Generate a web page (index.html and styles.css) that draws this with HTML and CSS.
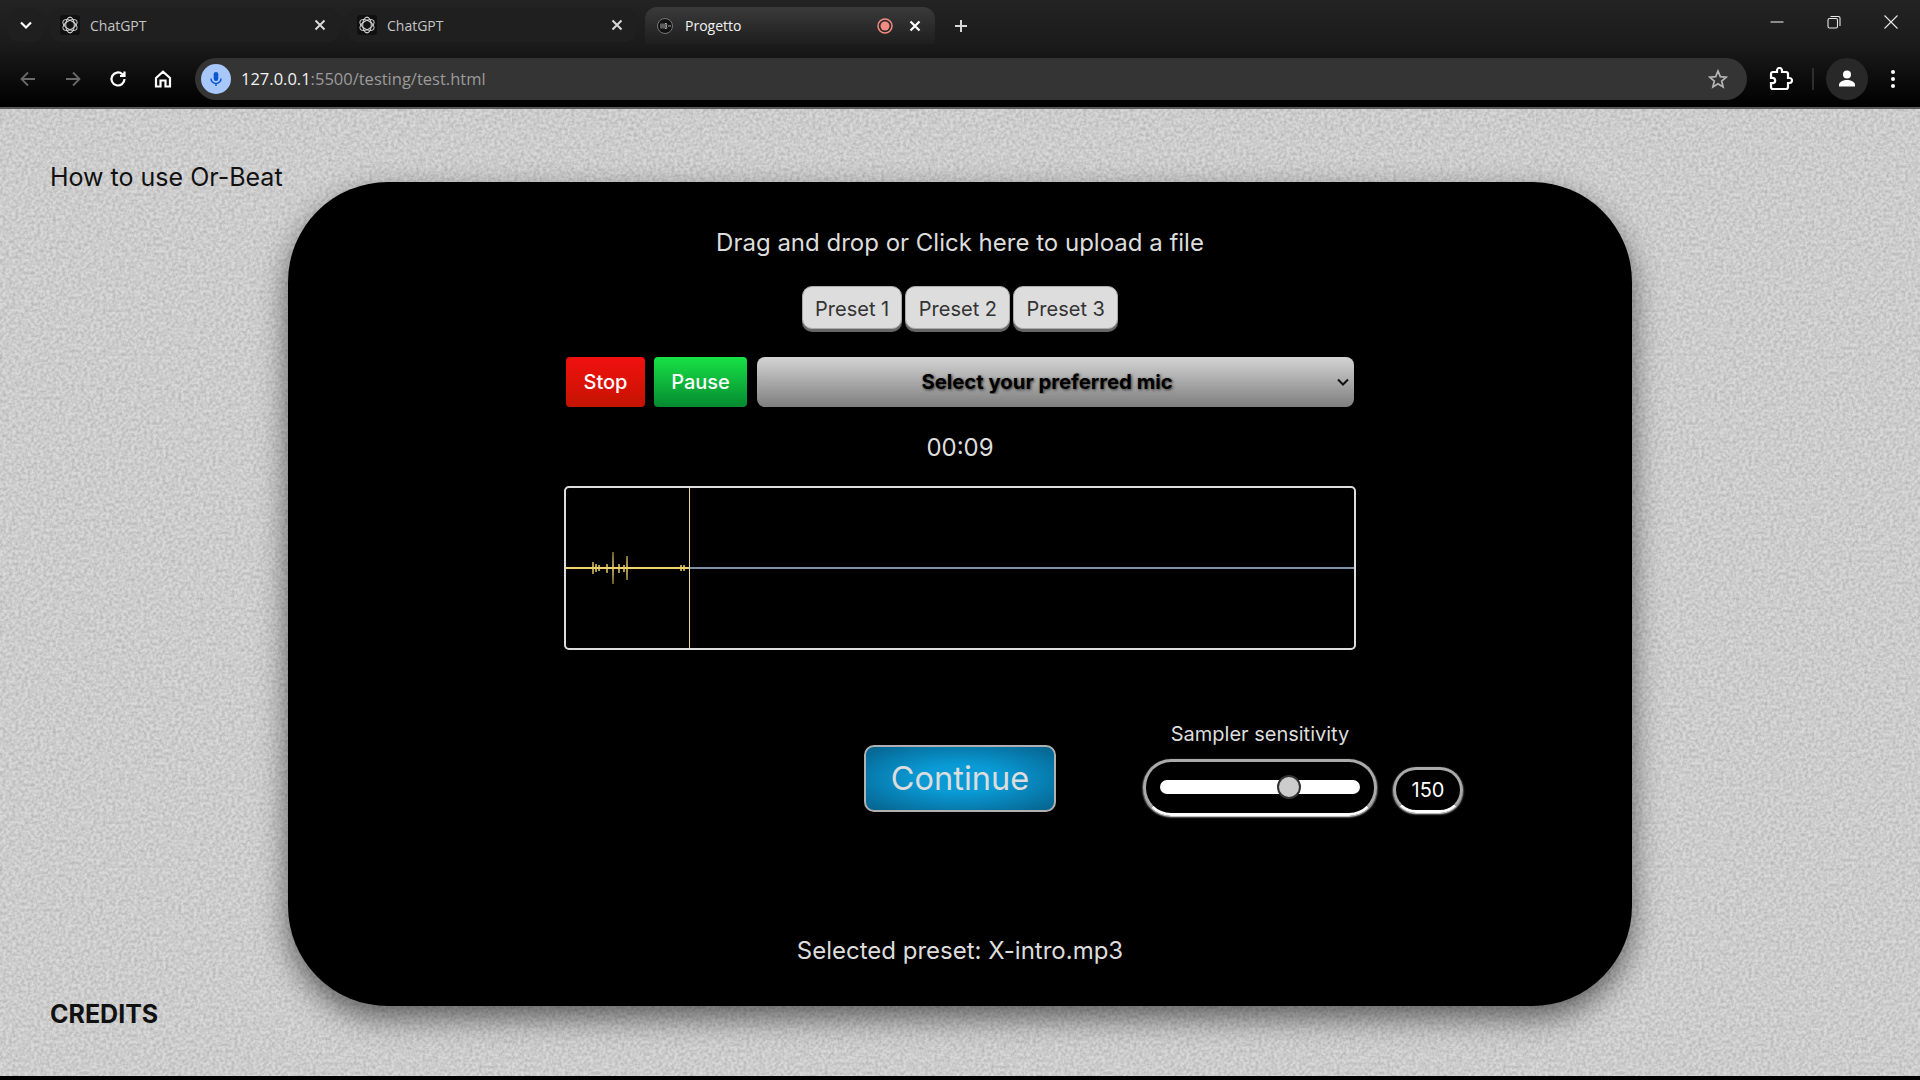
FILE: index.html
```html
<!DOCTYPE html>
<html lang="en">
<head>
    <meta charset="UTF-8">
    <meta name="viewport" content="width=device-width, initial-scale=1.0">
    <title>Progetto</title>
    <link rel="stylesheet" href="styles.css">
</head>
<body>

<header class="browser">
    <div class="tabstrip">
        <div class="tab-search">
            <svg width="16" height="16" viewBox="0 0 16 16"><path d="M3 5.500 8 10.500 13 5.500" class="line-white thick"/></svg>
        </div>
        <div class="tab">
            <span class="favicon">
                <svg width="18" height="18" viewBox="0 0 16 16"><g class="knot"><ellipse cx="8" cy="8" rx="3.800" ry="7"/><ellipse cx="8" cy="8" rx="3.800" ry="7" transform="rotate(60 8 8)"/><ellipse cx="8" cy="8" rx="3.800" ry="7" transform="rotate(120 8 8)"/></g></svg>
            </span>
            <span class="tab-title">ChatGPT</span>
            <svg class="tab-close" width="12" height="12" viewBox="0 0 12 12"><path d="M1.500 1.500 10.500 10.500M10.500 1.500 1.500 10.500" class="line-soft"/></svg>
        </div>
        <div class="tab">
            <span class="favicon">
                <svg width="18" height="18" viewBox="0 0 16 16"><g class="knot"><ellipse cx="8" cy="8" rx="3.800" ry="7"/><ellipse cx="8" cy="8" rx="3.800" ry="7" transform="rotate(60 8 8)"/><ellipse cx="8" cy="8" rx="3.800" ry="7" transform="rotate(120 8 8)"/></g></svg>
            </span>
            <span class="tab-title">ChatGPT</span>
            <svg class="tab-close" width="12" height="12" viewBox="0 0 12 12"><path d="M1.500 1.500 10.500 10.500M10.500 1.500 1.500 10.500" class="line-soft"/></svg>
        </div>
        <div class="tab tab-active">
            <span class="favicon favicon-round">
                <svg width="16" height="16" viewBox="0 0 16 16"><circle cx="8" cy="8" r="7.500" fill="#111" stroke="#777"/><path d="M4 5.500V10.500M6 5.500V10.500M8 5.500H9.500Q10.500 7 9 8Q10.500 9 9.500 10.500H8ZM11 8H14" fill="none" stroke="#aaa" stroke-width="1"/></svg>
            </span>
            <span class="tab-title">Progetto</span>
            <svg class="tab-record" width="16" height="16" viewBox="0 0 16 16"><circle cx="8" cy="8" r="7" fill="none" stroke="#f28b82" stroke-width="1.500"/><circle cx="8" cy="8" r="4.500" fill="#f28b82"/></svg>
            <svg class="tab-close" width="12" height="12" viewBox="0 0 12 12"><path d="M1.500 1.500 10.500 10.500M10.500 1.500 1.500 10.500" class="line-white thick"/></svg>
        </div>
        <div class="new-tab">
            <svg width="14" height="14" viewBox="0 0 14 14"><path d="M7 1V13M1 7H13" class="line-soft"/></svg>
        </div>
        <div class="window-controls">
            <svg width="14" height="14" viewBox="0 0 14 14"><path d="M0.500 7H13.500" class="line-thin"/></svg>
            <svg width="14" height="14" viewBox="0 0 14 14"><path d="M3.500 1.500H11.500Q13 1.500 13 3V11" class="line-thin"/><rect x="1" y="3.500" width="9.500" height="9.500" rx="1.500" class="line-thin"/></svg>
            <svg width="14" height="14" viewBox="0 0 14 14"><path d="M0.500 0.500 13.500 13.500M13.500 0.500 0.500 13.500" class="line-thin"/></svg>
        </div>
    </div>

    <div class="toolbar">
        <svg class="nav-icon" width="18" height="18" viewBox="0 0 18 18"><path d="M16 9H2.500M9 2.500 2.500 9 9 15.500" class="line-dim"/></svg>
        <svg class="nav-icon" width="18" height="18" viewBox="0 0 18 18"><path d="M2 9H15.500M9 2.500 15.500 9 9 15.500" class="line-dim"/></svg>
        <svg class="nav-icon" width="18" height="18" viewBox="0 0 18 18"><path d="M15.500 9A6.500 6.500 0 1 1 13.400 4.200L15.500 6M15.500 1.500V6H11" class="line-white thick"/></svg>
        <svg class="nav-icon" width="18" height="18" viewBox="0 0 18 18"><path d="M2 8 9 1.800 16 8V16.500H11.500V10.500H6.500V16.500H2Z" class="line-white thick"/></svg>

        <div class="address-bar">
            <span class="mic-badge">
                <svg width="18" height="18" viewBox="0 0 18 18"><rect x="6.700" y="2" width="4.600" height="9" rx="2.300" fill="#0b57d0"/><path d="M4 8.500A5 5 0 0 0 14 8.500M9 13.500V16" fill="none" stroke="#0b57d0" stroke-width="1.500"/></svg>
            </span>
            <span class="url"><span class="url-host">127.0.0.1</span>:5500/testing/test.html</span>
            <svg class="star" width="20" height="20" viewBox="0 0 20 20"><path d="M10 2 12.300 7.600 18.300 8.100 13.700 12 15.100 17.900 10 14.700 4.900 17.900 6.300 12 1.700 8.100 7.700 7.600Z" fill="none" stroke="#b5b5b5" stroke-width="1.700"/></svg>
        </div>

        <svg class="extension" width="24" height="24" viewBox="0 0 24 24"><path d="M20.500 11H19V7c0-1.100-.9-2-2-2h-4V3.500C13 2.120 11.880 1 10.500 1S8 2.120 8 3.500V5H4c-1.100 0-1.990.9-1.990 2v3.800H3.500c1.490 0 2.700 1.210 2.700 2.700s-1.210 2.700-2.700 2.700H2V20c0 1.100.9 2 2 2h13c1.100 0 2-.9 2-2v-4h1.500c1.380 0 2.500-1.120 2.500-2.500S21.880 11 20.500 11z" class="line-white thick"/></svg>
        <span class="toolbar-sep"></span>
        <span class="avatar">
            <svg width="20" height="20" viewBox="0 0 20 20"><circle cx="10" cy="5.500" r="4" fill="#fff"/><path d="M2 17.500V16C2 12.500 6.500 11 10 11S18 12.500 18 16V17.500Z" fill="#fff"/></svg>
        </span>
        <svg class="menu-dots" width="6" height="20" viewBox="0 0 6 20"><circle cx="3" cy="3" r="2" fill="#fff"/><circle cx="3" cy="10" r="2" fill="#fff"/><circle cx="3" cy="17" r="2" fill="#fff"/></svg>
    </div>
</header>

<div class="page">
    <aside class="side-links">
        <a class="how-to">How to use Or-Beat</a>
        <a class="credits">CREDITS</a>
    </aside>

    <main class="card">
        <p class="upload-text">Drag and drop or Click here to upload a file</p>

        <div class="presets">
            <button class="preset">Preset 1</button>
            <button class="preset">Preset 2</button>
            <button class="preset">Preset 3</button>
        </div>

        <div class="controls">
            <button class="btn-stop">Stop</button>
            <button class="btn-pause">Pause</button>
            <select class="mic-select">
                <option>Select your preferred mic</option>
            </select>
        </div>

        <p class="timer">00:09</p>

        <div class="waveform">
            <svg width="788" height="160" viewBox="0 0 788 160">
                <defs>
                    <linearGradient id="spike-fade" gradientUnits="userSpaceOnUse" x1="0" y1="48" x2="0" y2="112">
                        <stop offset="0" stop-color="#ecd06a" stop-opacity="0.1"/>
                        <stop offset="0.5" stop-color="#ecd06a"/>
                        <stop offset="1" stop-color="#ecd06a" stop-opacity="0.1"/>
                    </linearGradient>
                </defs>
                <path d="M123 80H788" stroke="#7992ac" stroke-width="2"/>
                <path d="M0 80H123" stroke="#f0d46e" stroke-width="2"/>
                <g class="spikes">
                    <path d="M27 74V86M30 76V84M33 77V83"/>
                    <path d="M41 76V85"/>
                    <path d="M47 64V96"/>
                    <path d="M53 76V85M58 77V84"/>
                    <path d="M61 68V92"/>
                    <path d="M115 77V83M118 77V83"/>
                </g>
                <path d="M123.500 0V160" stroke="#e8d690" stroke-width="1"/>
            </svg>
        </div>

        <div class="bottom-row">
            <div class="continue-cell">
                <button class="btn-continue">Continue</button>
            </div>
            <div class="sampler">
                <div class="sampler-main">
                    <label class="sampler-label" for="sensitivity">Sampler sensitivity</label>
                    <div class="slider-pill">
                        <input type="range" id="sensitivity" min="50" max="200" value="150">
                    </div>
                </div>
                <output class="sampler-value">150</output>
            </div>
        </div>

        <p class="selected">Selected preset: X-intro.mp3</p>
    </main>
</div>

</body>
</html>
```
FILE: styles.css
```css
* {
    box-sizing: border-box;
}
html, body {
    margin: 0;
    height: 1080px;
    overflow: hidden;
}
body {
    font-family: Inter, "Noto Sans", sans-serif;
    background: #000;
    display: flex;
    flex-direction: column;
}
p {
    margin: 0;
}

/* svg line helpers */
.line-white, .line-soft, .line-dim, .line-thin {
    fill: none;
    stroke-width: 1.6;
}
.line-white { stroke: #fff; }
.line-soft { stroke: #d8d8d8; stroke-width: 2; }
.line-dim { stroke: #6a6a6a; stroke-width: 1.8; }
.line-thin { stroke: #e6e6e6; stroke-width: 1.1; }
.thick { stroke-width: 2.2; }
.knot ellipse {
    fill: none;
    stroke: #d0d0d0;
    stroke-width: 0.9;
}

/* browser chrome */
.browser {
    font-family: "Open Sans", "Noto Sans", sans-serif;
    flex: none;
}
.tabstrip {
    height: 44px;
    background: linear-gradient(#232323, #1b1b1b);
    display: flex;
    align-items: flex-end;
    padding-left: 8px;
}
.tab-search {
    width: 36px;
    height: 34px;
    margin-bottom: 2px;
    border-radius: 12px;
    background: #1f1f1f;
    display: flex;
    align-items: center;
    justify-content: center;
}
.tab {
    width: 290px;
    height: 34px;
    margin: 0 0 2px 6px;
    padding: 0 14px 0 10px;
    border-radius: 12px;
    background: #1f1f1f;
    color: #c4c4c4;
    display: flex;
    align-items: center;
    font-size: 14px;
}
.tab + .tab {
    margin-left: 7px;
}
.tab-active {
    height: 37px;
    margin-bottom: 0;
    margin-left: 8px !important;
    color: #f2f2f2;
    border-radius: 12px 12px 0 0;
    background: linear-gradient(#3a3a3a, #1e1e1e);
}
.favicon {
    width: 20px;
    height: 20px;
    background: #101010;
    border-radius: 3px;
    display: flex;
    align-items: center;
    justify-content: center;
    margin-right: 10px;
}
.favicon-round {
    background: none;
}
.tab-title {
    flex: 1;
}
.tab-record {
    margin-right: 16px;
}
.new-tab {
    width: 36px;
    height: 36px;
    margin-left: 8px;
    display: flex;
    align-items: center;
    justify-content: center;
}
.window-controls {
    margin-left: auto;
    align-self: center;
    padding-right: 22px;
    display: flex;
    gap: 43px;
}
.toolbar {
    height: 65px;
    padding: 6px 0 0 19px;
    border-bottom: 2px solid #5a5a5a;
    background: linear-gradient(#1b1b1b, #000);
    display: flex;
    align-items: center;
}
.nav-icon {
    margin-right: 27px;
}
.address-bar {
    width: 1552px;
    height: 42px;
    margin-left: -4px;
    border-radius: 21px;
    background: #343434;
    display: flex;
    align-items: center;
    padding: 0 19px 0 6px;
}
.mic-badge {
    width: 30px;
    height: 30px;
    border-radius: 50%;
    background: #a8c7fa;
    display: flex;
    align-items: center;
    justify-content: center;
    margin-right: 10px;
}
.url {
    flex: 1;
    font-size: 16.500px;
    color: #9b9b9b;
}
.url-host {
    color: #f2f2f2;
}
.extension {
    margin-left: 22px;
}
.toolbar-sep {
    width: 2px;
    height: 22px;
    margin-left: 19px;
    background: #2e2e2e;
}
.avatar {
    width: 42px;
    height: 42px;
    margin-left: 12px;
    border-radius: 50%;
    background: #282828;
    display: flex;
    align-items: center;
    justify-content: center;
}
.menu-dots {
    margin-left: 22px;
}

/* page */
.page {
    height: 969px;
    border-bottom: 2px solid #000;
    display: flex;
    background-color: #d9d9d9;
    background-image: url("data:image/svg+xml,%3Csvg xmlns='http://www.w3.org/2000/svg' width='512' height='512'%3E%3Cfilter id='n' color-interpolation-filters='sRGB'%3E%3CfeTurbulence type='fractalNoise' baseFrequency='0.32' numOctaves='2' stitchTiles='stitch'/%3E%3CfeColorMatrix values='0 0 0 0 0 0 0 0 0 0 0 0 0 0 0 0.3 0 0 0 -0.09'/%3E%3C/filter%3E%3Crect width='512' height='512' filter='url(%23n)'/%3E%3C/svg%3E");
}
.side-links {
    width: 288px;
    padding: 52px 0 46px 50px;
    display: flex;
    flex-direction: column;
    justify-content: space-between;
    color: #111;
}
.how-to {
    font-size: 25px;
    line-height: 32px;
    white-space: nowrap;
}
.credits {
    font-size: 25px;
    line-height: 32px;
    font-weight: 700;
}
.card {
    width: 1344px;
    height: 824px;
    margin-top: 73px;
    padding-top: 45px;
    border-radius: 100px;
    background: #000;
    box-shadow: 0 12px 30px rgba(0, 0, 0, 0.55);
    color: #ddd;
    display: flex;
    flex-direction: column;
    align-items: center;
    text-align: center;
}
.upload-text {
    font-size: 24px;
    line-height: 32px;
}
.presets {
    margin-top: 27px;
    display: flex;
    gap: 3px;
}
.preset {
    font-family: inherit;
    font-size: 20px;
    height: 43px;
    padding: 2px 12.300px 0;
    margin-bottom: 3px;
    color: #333;
    background: #ddd;
    border: 1px solid #aaa;
    border-radius: 10px;
    box-shadow: 0 3px 0 #666;
}
.controls {
    margin-top: 25px;
    display: flex;
    width: 788px;
}
.controls button {
    font-family: inherit;
    font-size: 20px;
    font-weight: 500;
    height: 50px;
    border: none;
    border-radius: 4px;
    color: #fff;
}
.btn-stop {
    width: 79px;
    margin-right: 9px;
    background: linear-gradient(#f21010, #c41400);
}
.btn-pause {
    width: 93px;
    margin-right: 10px;
    background: linear-gradient(#18e246, #058a30);
}
.mic-select {
    -webkit-appearance: none;
    appearance: none;
    flex: 1;
    height: 50px;
    padding: 0 17px 2px 0;
    border: none;
    border-radius: 8px;
    background-image: url("data:image/svg+xml,%3Csvg xmlns='http://www.w3.org/2000/svg' width='12' height='8'%3E%3Cpath d='M1 1.500 6 6.500 11 1.500' fill='none' stroke='%23111' stroke-width='2'/%3E%3C/svg%3E"), linear-gradient(#d4d4d4, #7e7e7e);
    background-repeat: no-repeat;
    background-position: right 5px center, 0 0;
    font-family: inherit;
    font-size: 20.300px;
    font-weight: 700;
    color: #000;
    text-align: center;
    text-shadow: 1px 1px 3px #333;
}
.timer {
    margin-top: 26px;
    font-size: 24px;
    line-height: 30px;
}
.waveform {
    margin-top: 23px;
    width: 792px;
    height: 164px;
    border: 2px solid #ddd;
    border-radius: 5px;
    flex: none;
}
.waveform svg {
    display: block;
}
.spikes {
    stroke: url(#spike-fade);
    stroke-width: 2;
    fill: none;
    opacity: 0.8;
    filter: blur(0.4px);
}
.bottom-row {
    width: 100%;
    margin-top: 72px;
    height: 94px;
    display: grid;
    grid-template-columns: 1fr 192px 1fr;
}
.continue-cell {
    grid-column: 2;
    padding-top: 23px;
}
.btn-continue {
    width: 192px;
    height: 67px;
    font-family: inherit;
    font-size: 32.500px;
    color: #ddd;
    border: 2px solid #b0b0b0;
    border-radius: 10px;
    background: radial-gradient(ellipse at center, #0a9bd6 30%, #05618c 100%);
}
.sampler {
    grid-column: 3;
    margin-left: 87px;
    display: flex;
    gap: 16px;
}
.sampler-main {
    width: 234px;
}
.sampler-label {
    display: block;
    font-size: 20px;
    line-height: 24px;
}
.slider-pill {
    height: 57px;
    margin-top: 13px;
    padding: 0 14px;
    border: 3px solid #aaa;
    border-bottom-color: #fff;
    border-radius: 28px;
    box-shadow: 0 1px 2px #fff;
    display: flex;
    align-items: center;
}
.slider-pill input {
    -webkit-appearance: none;
    appearance: none;
    width: 100%;
    height: 14px;
    margin: 0;
    border-radius: 7px;
    background: #fff;
    transform: translateY(-1px);
}
.slider-pill input::-webkit-slider-thumb {
    -webkit-appearance: none;
    width: 24px;
    height: 24px;
    border-radius: 50%;
    background: #ccc;
    border: 2px solid #333;
}
.sampler-value {
    width: 70px;
    height: 46px;
    margin-top: 45px;
    border: 3px solid #aaa;
    border-bottom-color: #fff;
    border-radius: 23px;
    box-shadow: 0 1px 2px #fff;
    color: #fff;
    font-size: 20px;
    line-height: 40px;
}
.selected {
    margin-top: 120px;
    font-size: 24px;
    line-height: 30px;
}
```
